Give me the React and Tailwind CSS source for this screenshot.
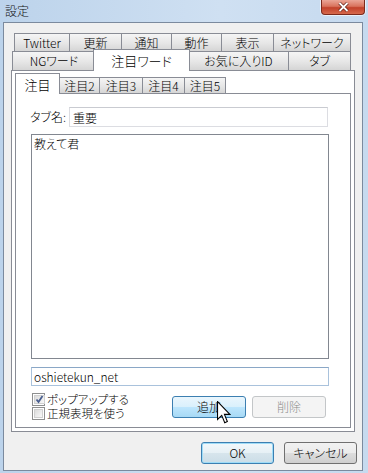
import React from 'react';

const rowOne = [
  { label: 'Twitter', w: 55 },
  { label: '更新', w: 52 },
  { label: '通知', w: 50 },
  { label: '動作', w: 50 },
  { label: '表示', w: 52 },
  { label: 'ネットワーク', w: 78 },
];

const rowTwo = [
  { label: 'NGワード', w: 83 },
  { label: '注目ワード', w: 97, selected: true },
  { label: 'お気に入りID', w: 100 },
  { label: 'タブ', w: 63 },
];

const subTabs = [
  { label: '注目', w: 45, selected: true },
  { label: '注目2', w: 40 },
  { label: '注目3', w: 43 },
  { label: '注目4', w: 42 },
  { label: '注目5', w: 41 },
];

const tabBg = 'bg-[linear-gradient(#f5f5f5,#e6e6e6_55%,#d5d5d5)]';

const CheckBox = ({ checked, label }) => (
  <div className="flex items-center h-[13px]">
    <span className="shrink-0 w-[13px] h-[13px] border border-[#8e8f8f] bg-white p-[1px] flex">
      <span className="flex-1 border border-[#d0d0d0] bg-[linear-gradient(135deg,#dcdcdc,#f8f8f8)] flex items-center justify-center">
        {checked && (
          <svg width="9" height="9" viewBox="0 0 9 9">
            <path d="M1.5 4.5 L3.5 7 L7.5 1" fill="none" stroke="#4a5f8f" strokeWidth="1.8" />
          </svg>
        )}
      </span>
    </span>
    <span className="ml-[2px] text-[11.5px] leading-[12px] h-[12px] font-['Liberation_Sans','Noto_Sans_CJK_JP',sans-serif]">
      {label}
    </span>
  </div>
);

const Cursor = () => (
  <svg
    className="absolute left-[217px] top-[401px]"
    width="14"
    height="23"
    viewBox="0 0 13 20.5"
    preserveAspectRatio="none"
  >
    <path
      d="M0.5 0.5 V16.5 L4.4 12.8 L7.2 19.3 L9.6 18.3 L6.9 11.9 H12 Z"
      fill="#fff"
      stroke="#000"
      strokeWidth="1"
      strokeLinejoin="miter"
    />
  </svg>
);

export default function App() {
  return (
    <div className="relative w-[368px] h-[473px] overflow-hidden flex flex-col bg-[linear-gradient(90deg,#bcd3eb,#cfe0f2_60%,#c6daef)] text-black font-light font-['Noto_Sans_CJK_JP','Noto_Sans',sans-serif] [font-feature-settings:'palt']">
      {/* title bar */}
      <div className="h-[22px] flex items-center pl-[5px] text-[12px] text-[#111]">設定</div>

      <div className="absolute right-[3px] top-0 w-[44px] h-[15px] rounded-b-[4px] border border-t-0 border-[#7c2a1c] bg-[linear-gradient(#eaa596,#d9735d_45%,#c2412a_55%,#d6694c)] shadow-[0_0_0_1px_rgba(255,255,255,0.6)] flex items-center justify-center">
        <svg width="11" height="10" viewBox="0 0 11 10">
          <path d="M1.5 1 L9.5 9 M9.5 1 L1.5 9" stroke="#5a1a10" strokeWidth="3.2" />
          <path d="M1.5 1 L9.5 9 M9.5 1 L1.5 9" stroke="#fff" strokeWidth="1.8" />
        </svg>
      </div>

      {/* client area */}
      <div className="ml-[3px] mr-[5px] mb-[2px] flex-1 bg-[#f0f0f0] border border-[#7b8a9e] pt-[10px] pl-[7px] pr-[5px] flex flex-col">
        {/* tab rows */}
        <div className="flex h-[18px] ml-[3px] text-[12px]">
          {rowOne.map((t, i) => (
            <div
              key={t.label}
              style={{ width: t.w }}
              className={`h-[18px] border-t border-l border-[#898c95] ${i === rowOne.length - 1 ? 'border-r' : ''} ${tabBg} flex items-center justify-center leading-none`}
            >
              {t.label}
            </div>
          ))}
        </div>
        <div className="flex h-[19px] ml-[1px] text-[12px] items-start">
          {rowTwo.map((t, i) =>
            t.selected ? (
              <div
                key={t.label}
                style={{ width: t.w }}
                className="relative z-10 -mx-[2px] -mt-[2px] h-[22px] border-t border-l border-r border-[#898c95] bg-white flex items-center justify-center leading-none text-[13px]"
              >
                {t.label}
              </div>
            ) : (
              <div
                key={t.label}
                style={{ width: t.w }}
                className={`h-[19px] border-t border-[#898c95] ${i === 0 ? 'border-l' : ''} ${i === rowTwo.length - 1 ? 'border-r' : ''} ${i > 1 ? 'border-l' : ''} ${tabBg} flex items-center justify-center leading-none`}
              >
                {t.label}
              </div>
            )
          )}
        </div>

        {/* outer panel */}
        <div className="w-[344px] h-[362px] border border-[#898c95] bg-white px-[3px] pb-[3px] flex flex-col">
          <div className="mt-[2px] h-[20px] flex items-start text-[12px]">
            {subTabs.map((t) =>
              t.selected ? (
                <div
                  key={t.label}
                  style={{ width: t.w }}
                  className="relative z-10 h-[21px] border-t border-l border-r border-[#898c95] bg-white flex items-center justify-center leading-none text-[13px]"
                >
                  {t.label}
                </div>
              ) : (
                <div
                  key={t.label}
                  style={{ width: t.w }}
                  className={`mt-[4px] h-[16px] border-t border-r border-[#898c95] ${tabBg} flex items-center justify-center leading-none`}
                >
                  {t.label}
                </div>
              )
            )}
          </div>

          {/* inner panel */}
          <div className="flex-1 border border-[#898c95] bg-white pl-[15px] pt-[13px] flex flex-col">
            <div className="flex items-center h-[20px] w-[298px]">
              <span className="w-[39px] -ml-[1px] text-[12px] leading-none">タブ名:</span>
              <input
                readOnly
                defaultValue="重要"
                className="w-[259px] h-[20px] border border-[#dcdde2] border-t-[#c9cbd1] px-[3px] text-[12px] outline-none bg-white"
              />
            </div>
            <textarea
              readOnly
              defaultValue="教えて君"
              className="mt-[7px] w-[298px] h-[225px] border border-[#828790] px-[2px] pt-[2px] text-[12px] leading-[14px] resize-none outline-none bg-white"
            />
            <input
              readOnly
              defaultValue="oshietekun_net"
              className="mt-[8px] w-[298px] h-[19px] border border-[#a9c2dc] border-t-[#8aa7c6] px-[2px] text-[12px] outline-none bg-white"
            />
            <div className="mt-[7px] flex items-start">
              <div className="w-[141px] pl-[1px] flex flex-col gap-[1px]">
                <CheckBox checked label="ポップアップする" />
                <CheckBox label="正規表現を使う" />
              </div>
              <div className="mt-[3px] flex gap-[6px]">
                <button className="w-[74px] h-[22px] rounded-[3px] border border-[#3c7fb1] bg-[linear-gradient(#eaf6fd,#d9f0fc_50%,#bee6fd_50%,#a7d9f5)] text-[12px] leading-none flex items-center justify-center">
                  追加
                </button>
                <button className="w-[74px] h-[22px] rounded-[3px] border border-[#c3c6c8] bg-[#f4f4f4] text-[12px] text-[#8d8d8d] leading-none flex items-center justify-center">
                  削除
                </button>
              </div>
            </div>
          </div>
        </div>

        {/* dialog buttons */}
        <div className="mt-[10px] flex justify-end gap-[10px]">
          <button className="w-[73px] h-[22px] rounded-[3px] border border-[#3c7fb1] shadow-[inset_0_0_0_1px_#9fdcf7] bg-[linear-gradient(#f2f8fb,#e6f0f5_50%,#d7e5ec_50%,#cbdde7)] text-[12px] leading-none flex items-center justify-center">
            OK
          </button>
          <button className="w-[73px] h-[22px] rounded-[3px] border border-[#707070] bg-[linear-gradient(#f2f2f2,#ebebeb_50%,#dddddd_50%,#cfcfcf)] text-[12px] leading-none flex items-center justify-center">
            キャンセル
          </button>
        </div>
      </div>

      <Cursor />
    </div>
  );
}
